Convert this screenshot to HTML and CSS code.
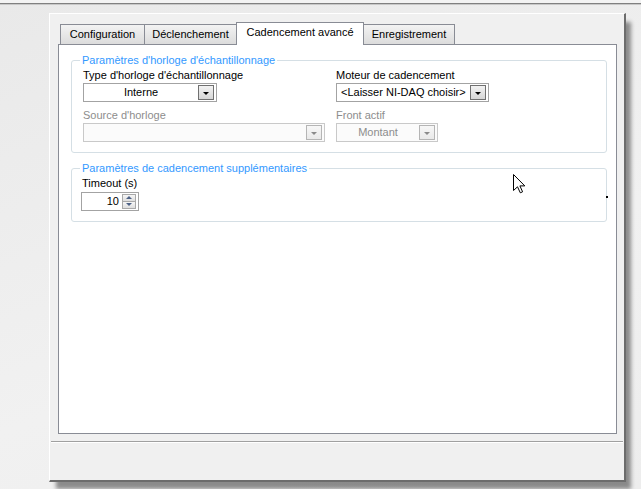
FILE: index.html
```html
<!doctype html>
<html>
<head>
<meta charset="UTF-8">
<title>Cadencement avancé</title>
<link rel="stylesheet" href="styles.css">
</head>
<body>
<div class="topbar"></div>

<div class="window">
	<div class="tabs">
		<div class="tab tab_config">Configuration</div>
		<div class="tab tab_trigger">Déclenchement</div>
		<div class="tab tab_timing active">Cadencement avancé</div>
		<div class="tab tab_logging">Enregistrement</div>
	</div>

	<div class="page">
		<fieldset class="group">
			<legend>Paramètres d'horloge d'échantillonnage</legend>
			<div class="row">
				<div class="field col_left">
					<div class="label">Type d'horloge d'échantillonnage</div>
					<div class="combo combo_type">
						<span class="combo_text center">Interne</span>
						<span class="combo_btn"></span>
					</div>
				</div>
				<div class="field">
					<div class="label">Moteur de cadencement</div>
					<div class="combo combo_engine">
						<span class="combo_text">&lt;Laisser NI-DAQ choisir&gt;</span>
						<span class="combo_btn"></span>
					</div>
				</div>
			</div>
			<div class="row row_second">
				<div class="field col_left">
					<div class="label disabled">Source d'horloge</div>
					<div class="combo combo_source disabled">
						<span class="combo_text"></span>
						<span class="combo_btn"></span>
					</div>
				</div>
				<div class="field">
					<div class="label disabled">Front actif</div>
					<div class="combo combo_edge disabled">
						<span class="combo_text center">Montant</span>
						<span class="combo_btn"></span>
					</div>
				</div>
			</div>
		</fieldset>

		<fieldset class="group group_extra">
			<legend>Paramètres de cadencement supplémentaires</legend>
			<div class="field">
				<div class="label">Timeout (s)</div>
				<div class="spin">
					<span class="spin_value">10</span>
					<span class="spin_btns">
						<span class="spin_up"></span>
						<span class="spin_down"></span>
					</span>
				</div>
			</div>
		</fieldset>
	</div>

	<div class="footer"></div>
</div>

<svg class="cursor" width="13" height="20" viewBox="0 0 13 20">
	<path d="M0.5 0.5 L0.5 16.5 L4.5 12.8 L7.3 18.8 L9.6 17.8 L6.9 11.9 L11.8 11.9 Z" fill="#fff" stroke="#000" stroke-width="1"/>
</svg>
<span class="dot"></span>
</body>
</html>
```

FILE: styles.css
```css
html, body {
	margin: 0;
	padding: 0;
}
body {
	position: relative;
	height: 489px;
	overflow: hidden;
	background: linear-gradient(160deg, #e9e9e9 0%, #f1f1f1 60%, #ededed 100%);
	font-family: "Liberation Sans", Arial, sans-serif;
	font-size: 11px;
	color: #000;
}

.topbar {
	height: 3px;
	background: #f3f3f3;
	border-bottom: 1px solid #808080;
	box-shadow: 0 1px 0 #c8c8c8;
}

/* window */
.window {
	box-sizing: border-box;
	width: 577px;
	height: 469px;
	margin: 9px 0 0 49px;
	padding: 8px 7px 0 8px;
	display: flex;
	flex-direction: column;
	background: #f0f0f0;
	border-top: 1px solid #fff;
	border-left: 1px solid #fff;
	border-right: 2px solid #6c6c6c;
	border-bottom: 2px solid #6c6c6c;
	box-shadow: 6px 8px 4px -1px rgba(0, 0, 0, 0.42);
}

/* tabs */
.tabs {
	display: flex;
	align-items: flex-end;
	height: 22px;
	padding-left: 2px;
}
.tab {
	box-sizing: border-box;
	height: 20px;
	margin-right: -1px;
	border: 1px solid #898c95;
	border-bottom: none;
	background: linear-gradient(#f3f3f3, #dcdcdc);
	text-align: center;
	line-height: 19px;
	white-space: nowrap;
}
.tab_config { width: 85px; }
.tab_trigger { width: 93px; }
.tab_timing { width: 128px; }
.tab_logging { width: 92px; }
.tab.active {
	position: relative;
	z-index: 1;
	height: 23px;
	margin-bottom: -1px;
	background: #fff;
}

/* page */
.page {
	box-sizing: border-box;
	width: 559px;
	height: 390px;
	padding: 9px 9px 0 12px;
	background: #fff;
	border: 1px solid #898c95;
}

.group {
	margin: 0;
	padding: 0 0 10px 11px;
	border: 1px solid #d5dfe5;
	border-radius: 3px;
	min-width: 0;
}
.group legend {
	margin-left: -3px;
	padding: 0 2px;
	line-height: 13px;
	color: #3399ff;
}
.group_extra {
	margin-top: 9px;
}

.row {
	display: flex;
	padding-top: 2px;
}
.row_second {
	padding-top: 7px;
}
.col_left {
	width: 253px;
}
.label {
	line-height: 13px;
	margin-bottom: 1px;
	white-space: nowrap;
}
.label.disabled {
	color: #8d8d8d;
}

/* combo boxes */
.combo {
	box-sizing: border-box;
	display: flex;
	align-items: center;
	height: 19px;
	padding: 1px 2px 1px 0;
	border: 1px solid #a3a3a3;
	background: #fff;
}
.combo_type { width: 134px; }
.combo_engine { width: 153px; }
.combo_source { width: 242px; }
.combo_edge { width: 102px; }

.combo_text {
	flex: 1;
	padding-left: 4px;
	line-height: 15px;
	white-space: nowrap;
}
.combo_text.center {
	padding-left: 0;
	text-align: center;
}
.combo_btn {
	position: relative;
	box-sizing: border-box;
	width: 16px;
	height: 15px;
	border: 1px solid #707070;
	background: linear-gradient(#f2f2f2, #d6d6d6);
}
.combo_btn:after {
	content: '';
	position: absolute;
	left: 4px;
	top: 6px;
	border-left: 3px solid transparent;
	border-right: 3px solid transparent;
	border-top: 3px solid #000;
}
.combo.disabled {
	border-color: #c9c9c9;
	color: #8d8d8d;
	background: #fbfbfb;
}
.combo.disabled .combo_btn {
	border-color: #b5b5b5;
	background: linear-gradient(#f7f7f7, #e9e9e9);
}
.combo.disabled .combo_btn:after {
	border-top-color: #8a8a8a;
}

/* spin box */
.group_extra .field {
	padding-top: 2px;
}
.group_extra .label {
	margin-left: -1px;
	margin-bottom: 2px;
}
.spin {
	box-sizing: border-box;
	display: flex;
	align-items: center;
	width: 58px;
	height: 19px;
	margin-left: -2px;
	padding: 1px 2px 1px 0;
	border: 1px solid #a3a3a3;
	background: #fff;
}
.spin_value {
	flex: 1;
	padding-right: 3px;
	text-align: right;
	line-height: 15px;
}
.spin_btns {
	display: flex;
	flex-direction: column;
	width: 14px;
	height: 15px;
}
.spin_up, .spin_down {
	position: relative;
	box-sizing: border-box;
	flex: 1;
	border: 1px solid #a9a9a9;
	background: linear-gradient(#f6f6f6, #dedede);
}
.spin_down {
	border-top: none;
}
.spin_up:after, .spin_down:after {
	content: '';
	position: absolute;
	left: 3px;
	border-left: 3px solid transparent;
	border-right: 3px solid transparent;
}
.spin_up:after {
	top: 1px;
	border-bottom: 3px solid #4d6185;
}
.spin_down:after {
	top: 1px;
	border-top: 3px solid #4d6185;
}

/* bottom */
.footer {
	flex: 1;
	margin: 7px -6px 0 -7px;
	border-top: 1px solid #a0a0a0;
	box-shadow: inset 0 1px 0 #fff;
}

/* pointer and stray pixel over the dialog */
.cursor {
	position: absolute;
	left: 513px;
	top: 174px;
}
.dot {
	position: absolute;
	left: 606px;
	top: 196px;
	width: 2px;
	height: 2px;
	background: #000;
}
```
